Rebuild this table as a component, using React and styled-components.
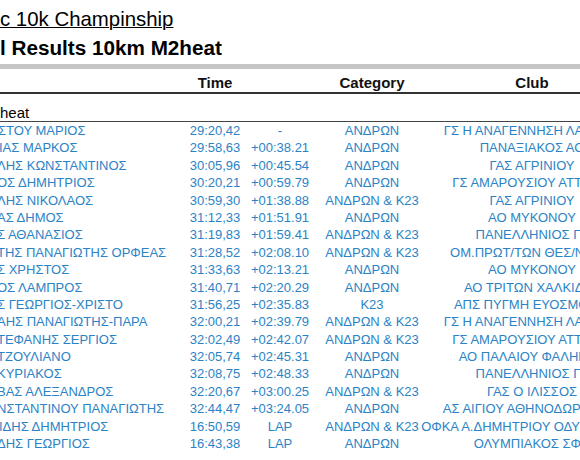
import React from "react";
import styled, { createGlobalStyle } from "styled-components";

const GlobalStyle = createGlobalStyle`
  html, body { margin: 0; padding: 0; background: #fff; overflow: hidden; }
  body {
    width: 580px;
    height: 460px;
    font-family: "Liberation Sans", Arial, "Noto Sans", sans-serif;
    color: #000;
  }
`;

const Page = styled.div`
  width: 660px;
  padding-top: 6px;
`;

const Title = styled.h1`
  margin: 0;
  font-size: ${(p) => (p.$bold ? "20.7px" : "20.4px")};
  line-height: 27.5px;
  font-weight: ${(p) => (p.$bold ? 700 : 400)};
  text-decoration: ${(p) => (p.$underline ? "underline" : "none")};
  text-decoration-thickness: 1.3px;
  white-space: nowrap;
  color: #000;
`;

const Rule = styled.div`
  margin-top: 3px;
  height: 5px;
  background: #c6c6c6;
`;

const Row = styled.div`
  display: grid;
  grid-template-columns: 190px 50px 80px 104px 216px;
`;

const HeaderRow = styled(Row)`
  padding: 5px 0 1px;
  font-size: 15px;
  line-height: 17px;
  font-weight: 700;
  color: #111;
  border-bottom: 2px solid #333;
`;

const SectionRow = styled.div`
  padding-top: 10px;
  font-size: 15px;
  line-height: 17px;
  border-bottom: 1.5px solid #444;
  color: #000;
`;

const DataRow = styled(Row)`
  height: 17.4px;
  font-size: 13px;
  line-height: 17.4px;
  color: #2b83c6;
`;

const Cell = styled.div`
  display: flex;
  justify-content: ${(p) => p.$align || "center"};
  white-space: nowrap;
  min-width: 0;
`;

const Name = styled.span`
  margin-left: ${(p) => p.$shift}px;
`;

const rows = [
  ["ΣΤΟΥ ΜΑΡΙΟΣ", "29:20,42", "-", "ΑΝΔΡΩΝ", "ΓΣ Η ΑΝΑΓΕΝΝΗΣΗ ΛΑΡΙΣΑΣ", -2],
  ["ΙΑΣ ΜΑΡΚΟΣ", "29:58,63", "+00:38.21", "ΑΝΔΡΩΝ", "ΠΑΝΑΞΙΑΚΟΣ ΑΟ", -1],
  ["ΛΗΣ ΚΩΝΣΤΑΝΤΙΝΟΣ", "30:05,96", "+00:45.54", "ΑΝΔΡΩΝ", "ΓΑΣ ΑΓΡΙΝΙΟΥ", -3],
  ["ΟΣ ΔΗΜΗΤΡΙΟΣ", "30:20,21", "+00:59.79", "ΑΝΔΡΩΝ", "ΓΣ ΑΜΑΡΟΥΣΙΟΥ ΑΤΤΙΚΗΣ", -3],
  ["ΛΗΣ ΝΙΚΟΛΑΟΣ", "30:59,30", "+01:38.88", "ΑΝΔΡΩΝ & Κ23", "ΓΑΣ ΑΓΡΙΝΙΟΥ", -3],
  ["ΑΣ ΔΗΜΟΣ", "31:12,33", "+01:51.91", "ΑΝΔΡΩΝ", "ΑΟ ΜΥΚΟΝΟΥ", -3],
  ["Σ ΑΘΑΝΑΣΙΟΣ", "31:19,83", "+01:59.41", "ΑΝΔΡΩΝ & Κ23", "ΠΑΝΕΛΛΗΝΙΟΣ ΓΣ", -3],
  ["ΤΗΣ ΠΑΝΑΓΙΩΤΗΣ ΟΡΦΕΑΣ", "31:28,52", "+02:08.10", "ΑΝΔΡΩΝ & Κ23", "ΟΜ.ΠΡΩΤ/ΤΩΝ ΘΕΣ/ΝΙΚΗΣ", -3],
  ["Σ ΧΡΗΣΤΟΣ", "31:33,63", "+02:13.21", "ΑΝΔΡΩΝ", "ΑΟ ΜΥΚΟΝΟΥ", -3],
  ["ΟΣ ΛΑΜΠΡΟΣ", "31:40,71", "+02:20.29", "ΑΝΔΡΩΝ", "ΑΟ ΤΡΙΤΩΝ ΧΑΛΚΙΔΑΣ", -3],
  ["Σ ΓΕΩΡΓΙΟΣ-ΧΡΙΣΤΟ", "31:56,25", "+02:35.83", "Κ23", "ΑΠΣ ΠΥΓΜΗ ΕΥΟΣΜΟΥ Θ", -3],
  ["ΑΗΣ ΠΑΝΑΓΙΩΤΗΣ-ΠΑΡΑ", "32:00,21", "+02:39.79", "ΑΝΔΡΩΝ & Κ23", "ΓΣ Η ΑΝΑΓΕΝΝΗΣΗ ΛΑΡΙΣΑΣ", -3],
  ["ΤΕΦΑΝΗΣ ΣΕΡΓΙΟΣ", "32:02,49", "+02:42.07", "ΑΝΔΡΩΝ & Κ23", "ΓΣ ΑΜΑΡΟΥΣΙΟΥ ΑΤΤΙΚΗΣ", -3],
  ["ΤΖΟΥΛΙΑΝΟ", "32:05,74", "+02:45.31", "ΑΝΔΡΩΝ", "ΑΟ ΠΑΛΑΙΟΥ ΦΑΛΗΡΟΥ", -3],
  ["ΚΥΡΙΑΚΟΣ", "32:08,75", "+02:48.33", "ΑΝΔΡΩΝ", "ΠΑΝΕΛΛΗΝΙΟΣ ΓΣ", -3],
  ["ΒΑΣ ΑΛΕΞΑΝΔΡΟΣ", "32:20,67", "+03:00.25", "ΑΝΔΡΩΝ & Κ23", "ΓΑΣ Ο ΙΛΙΣΣΟΣ", -3],
  ["ΝΣΤΑΝΤΙΝΟΥ ΠΑΝΑΓΙΩΤΗΣ", "32:44,47", "+03:24.05", "ΑΝΔΡΩΝ", "ΑΣ ΑΙΓΙΟΥ ΑΘΗΝΟΔΩΡΟΣ ΑΙΓ", -3],
  ["ΙΔΗΣ ΔΗΜΗΤΡΙΟΣ", "16:50,59", "LAP", "ΑΝΔΡΩΝ & Κ23", "ΟΦΚΑ Α.ΔΗΜΗΤΡΙΟΥ ΟΔΥΣΣΕΑΣ ΑΟ", -1],
  ["ΔΗΣ ΓΕΩΡΓΙΟΣ", "16:43,38", "LAP", "ΑΝΔΡΩΝ", "ΟΛΥΜΠΙΑΚΟΣ ΣΦΠ", -3],
];

export default function App() {
  return (
    <>
      <GlobalStyle />
      <Page>
        <Title $underline>c 10k Champinship</Title>
        <Title $bold>l Results 10km M2heat</Title>
        <Rule />
        <HeaderRow>
          <Cell />
          <Cell>Time</Cell>
          <Cell />
          <Cell>Category</Cell>
          <Cell>Club</Cell>
        </HeaderRow>
        <SectionRow>heat</SectionRow>
        {rows.map(([name, time, gap, cat, club, shift], i) => (
          <DataRow key={i}>
            <Cell $align="flex-start">
              <Name $shift={shift}>{name}</Name>
            </Cell>
            <Cell>{time}</Cell>
            <Cell>{gap}</Cell>
            <Cell>{cat}</Cell>
            <Cell>{club}</Cell>
          </DataRow>
        ))}
      </Page>
    </>
  );
}
